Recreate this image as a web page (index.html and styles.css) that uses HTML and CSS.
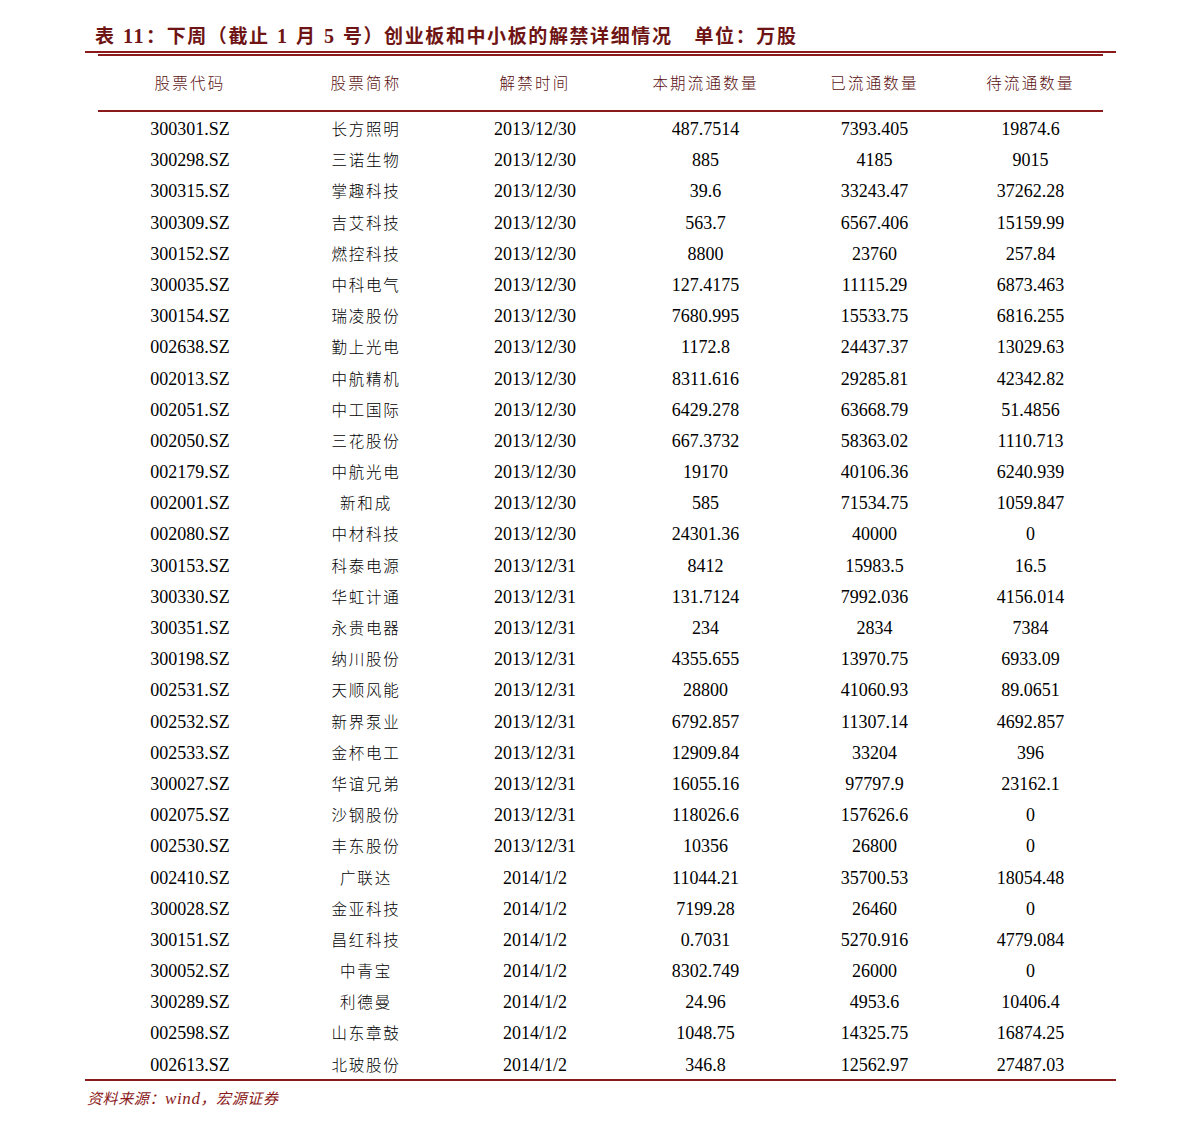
FILE: index.html
```html
<!DOCTYPE html>
<html lang="zh-CN">
<head>
<meta charset="utf-8">
<title>表 11</title>
<link rel="stylesheet" href="styles.css">
</head>
<body>
<div class="page">
  <h1 class="title">表 <span class="num">11</span>：下周（截止 <span class="num">1</span> 月 <span class="num">5</span> 号）创业板和中小板的解禁详细情况<span class="unit">单位：万股</span></h1>
  <div class="rule-top"></div>
  <div class="table">
    <div class="rule-second"></div>
    <div class="row head">
      <div>股票代码</div><div>股票简称</div><div>解禁时间</div><div>本期流通数量</div><div>已流通数量</div><div>待流通数量</div>
    </div>
    <div class="rule-head"></div>
    <div class="body">
      <div class="row"><div>300301.SZ</div><div class="cn">长方照明</div><div>2013/12/30</div><div>487.7514</div><div>7393.405</div><div>19874.6</div></div>
      <div class="row"><div>300298.SZ</div><div class="cn">三诺生物</div><div>2013/12/30</div><div>885</div><div>4185</div><div>9015</div></div>
      <div class="row"><div>300315.SZ</div><div class="cn">掌趣科技</div><div>2013/12/30</div><div>39.6</div><div>33243.47</div><div>37262.28</div></div>
      <div class="row"><div>300309.SZ</div><div class="cn">吉艾科技</div><div>2013/12/30</div><div>563.7</div><div>6567.406</div><div>15159.99</div></div>
      <div class="row"><div>300152.SZ</div><div class="cn">燃控科技</div><div>2013/12/30</div><div>8800</div><div>23760</div><div>257.84</div></div>
      <div class="row"><div>300035.SZ</div><div class="cn">中科电气</div><div>2013/12/30</div><div>127.4175</div><div>11115.29</div><div>6873.463</div></div>
      <div class="row"><div>300154.SZ</div><div class="cn">瑞凌股份</div><div>2013/12/30</div><div>7680.995</div><div>15533.75</div><div>6816.255</div></div>
      <div class="row"><div>002638.SZ</div><div class="cn">勤上光电</div><div>2013/12/30</div><div>1172.8</div><div>24437.37</div><div>13029.63</div></div>
      <div class="row"><div>002013.SZ</div><div class="cn">中航精机</div><div>2013/12/30</div><div>8311.616</div><div>29285.81</div><div>42342.82</div></div>
      <div class="row"><div>002051.SZ</div><div class="cn">中工国际</div><div>2013/12/30</div><div>6429.278</div><div>63668.79</div><div>51.4856</div></div>
      <div class="row"><div>002050.SZ</div><div class="cn">三花股份</div><div>2013/12/30</div><div>667.3732</div><div>58363.02</div><div>1110.713</div></div>
      <div class="row"><div>002179.SZ</div><div class="cn">中航光电</div><div>2013/12/30</div><div>19170</div><div>40106.36</div><div>6240.939</div></div>
      <div class="row"><div>002001.SZ</div><div class="cn">新和成</div><div>2013/12/30</div><div>585</div><div>71534.75</div><div>1059.847</div></div>
      <div class="row"><div>002080.SZ</div><div class="cn">中材科技</div><div>2013/12/30</div><div>24301.36</div><div>40000</div><div>0</div></div>
      <div class="row"><div>300153.SZ</div><div class="cn">科泰电源</div><div>2013/12/31</div><div>8412</div><div>15983.5</div><div>16.5</div></div>
      <div class="row"><div>300330.SZ</div><div class="cn">华虹计通</div><div>2013/12/31</div><div>131.7124</div><div>7992.036</div><div>4156.014</div></div>
      <div class="row"><div>300351.SZ</div><div class="cn">永贵电器</div><div>2013/12/31</div><div>234</div><div>2834</div><div>7384</div></div>
      <div class="row"><div>300198.SZ</div><div class="cn">纳川股份</div><div>2013/12/31</div><div>4355.655</div><div>13970.75</div><div>6933.09</div></div>
      <div class="row"><div>002531.SZ</div><div class="cn">天顺风能</div><div>2013/12/31</div><div>28800</div><div>41060.93</div><div>89.0651</div></div>
      <div class="row"><div>002532.SZ</div><div class="cn">新界泵业</div><div>2013/12/31</div><div>6792.857</div><div>11307.14</div><div>4692.857</div></div>
      <div class="row"><div>002533.SZ</div><div class="cn">金杯电工</div><div>2013/12/31</div><div>12909.84</div><div>33204</div><div>396</div></div>
      <div class="row"><div>300027.SZ</div><div class="cn">华谊兄弟</div><div>2013/12/31</div><div>16055.16</div><div>97797.9</div><div>23162.1</div></div>
      <div class="row"><div>002075.SZ</div><div class="cn">沙钢股份</div><div>2013/12/31</div><div>118026.6</div><div>157626.6</div><div>0</div></div>
      <div class="row"><div>002530.SZ</div><div class="cn">丰东股份</div><div>2013/12/31</div><div>10356</div><div>26800</div><div>0</div></div>
      <div class="row"><div>002410.SZ</div><div class="cn">广联达</div><div>2014/1/2</div><div>11044.21</div><div>35700.53</div><div>18054.48</div></div>
      <div class="row"><div>300028.SZ</div><div class="cn">金亚科技</div><div>2014/1/2</div><div>7199.28</div><div>26460</div><div>0</div></div>
      <div class="row"><div>300151.SZ</div><div class="cn">昌红科技</div><div>2014/1/2</div><div>0.7031</div><div>5270.916</div><div>4779.084</div></div>
      <div class="row"><div>300052.SZ</div><div class="cn">中青宝</div><div>2014/1/2</div><div>8302.749</div><div>26000</div><div>0</div></div>
      <div class="row"><div>300289.SZ</div><div class="cn">利德曼</div><div>2014/1/2</div><div>24.96</div><div>4953.6</div><div>10406.4</div></div>
      <div class="row"><div>002598.SZ</div><div class="cn">山东章鼓</div><div>2014/1/2</div><div>1048.75</div><div>14325.75</div><div>16874.25</div></div>
      <div class="row"><div>002613.SZ</div><div class="cn">北玻股份</div><div>2014/1/2</div><div>346.8</div><div>12562.97</div><div>27487.03</div></div>
    </div>
  </div>
  <div class="rule-bottom"></div>
  <p class="source">资料来源：<span class="latin">wind</span>，宏源证券</p>
</div>
</body>
</html>
```

FILE: styles.css
```css
html, body {
  margin: 0;
  padding: 0;
  background: #ffffff;
}

body {
  font-family: "Liberation Serif", "Noto Sans CJK SC", serif;
  color: #000000;
}

.page {
  width: 1031px;
  margin-left: 85px;
  padding-top: 21px;
}

.title {
  margin: 0;
  padding-left: 10px;
  height: 30px;
  line-height: 30px;
  font-size: 19px;
  font-weight: bold;
  letter-spacing: 1.6px;
  color: #6e1414;
  font-family: "Liberation Serif", "Noto Sans CJK SC", serif;
  white-space: nowrap;
}

.title .num {
  font-size: 20px;
  padding: 0 1px;
}

.title .unit {
  margin-left: 22px;
}

.rule-top {
  height: 2px;
  background: #8b1a1a;
}

.table {
  margin: 0 13px;
  padding-top: 1px;
}

.rule-second {
  height: 2px;
  background: #8b1a1a;
}

.row {
  display: grid;
  grid-template-columns: 184px 168px 170px 171px 167px 145px;
  align-items: baseline;
  text-align: center;
  box-sizing: border-box;
  height: 31.2px;
  padding-top: 6px;
  line-height: 20px;
  font-size: 18px;
}

.row .cn {
  font-family: "Noto Sans CJK SC", sans-serif;
  font-size: 15.5px;
  font-weight: 300;
  letter-spacing: 1.8px;
}

.row.head {
  height: 54px;
  padding-top: 16px;
  font-family: "Noto Sans CJK SC", sans-serif;
  font-size: 15.5px;
  font-weight: 300;
  letter-spacing: 2.2px;
  color: #5a1010;
}

.rule-head {
  height: 2px;
  background: #8b1a1a;
}

.rule-bottom {
  height: 2px;
  background: #8b1a1a;
}

.source {
  margin: 6px 0 0 2px;
  font-size: 15px;
  font-style: italic;
  color: #8b1a1a;
  font-family: "Liberation Serif", "Noto Sans CJK SC", serif;
  letter-spacing: 0.6px;
}

.source .latin {
  font-size: 17px;
}
```
